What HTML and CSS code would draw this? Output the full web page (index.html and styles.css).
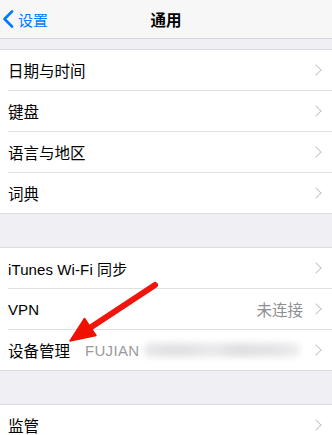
FILE: index.html
```html
<!DOCTYPE html>
<html lang="zh-CN">
<head>
<meta charset="utf-8">
<title>通用</title>
<link rel="stylesheet" href="styles.css">
</head>
<body>
<div class="screen">
  <header class="nav">
    <div class="back">
      <svg class="back-icon" width="12" height="18" viewBox="0 0 12 18"><path d="M10 1.5 L2.5 9 L10 16.5" fill="none" stroke="#007aff" stroke-width="2.6" stroke-linecap="round" stroke-linejoin="round"/></svg>
      <span>设置</span>
    </div>
    <div class="title">通用</div>
  </header>

  <div class="gap gap-top"></div>
  <ul class="group">
    <li class="row"><span class="label">日期与时间</span><i class="chev"></i></li>
    <li class="row"><span class="label">键盘</span><i class="chev"></i></li>
    <li class="row"><span class="label">语言与地区</span><i class="chev"></i></li>
    <li class="row"><span class="label">词典</span><i class="chev"></i></li>
  </ul>

  <div class="gap"></div>
  <ul class="group">
    <li class="row"><span class="label latin">iTunes Wi-Fi 同步</span><i class="chev"></i></li>
    <li class="row"><span class="label latin">VPN</span><span class="value">未连接</span><i class="chev"></i></li>
    <li class="row"><span class="label">设备管理</span><span class="detail">FUJIAN</span><span class="blur"></span><i class="chev"></i></li>
  </ul>

  <div class="gap"></div>
  <ul class="group">
    <li class="row"><span class="label">监管</span><i class="chev"></i></li>
  </ul>

  <svg class="arrow" width="332" height="435" viewBox="0 0 332 435">
    <defs>
      <linearGradient id="ar" x1="0" y1="0" x2="1" y2="1">
        <stop offset="0" stop-color="#ff2a1a"/>
        <stop offset="1" stop-color="#e00000"/>
      </linearGradient>
    </defs>
    <line x1="155" y1="285" x2="92" y2="326.5" stroke="url(#ar)" stroke-width="6" stroke-linecap="round"/>
    <polygon points="70,341 96,335.5 84.5,318.5" fill="#f01000" stroke="#f01000" stroke-width="1.5" stroke-linejoin="round"/>
  </svg>
</div>
</body>
</html>
```

FILE: styles.css
```css
html, body {
  margin: 0;
  padding: 0;
  background: #efeff4;
}
.screen {
  position: relative;
  width: 332px;
  height: 435px;
  overflow: hidden;
  font-family: "Noto Sans CJK SC", "Liberation Sans", sans-serif;
  color: #000;
}
.nav {
  height: 38px;
  background: #f7f7f8;
  border-bottom: 1px solid #d6d6da;
  display: flex;
  align-items: center;
  justify-content: center;
  position: relative;
}
.back {
  position: absolute;
  left: 2px;
  top: 0;
  height: 38px;
  display: flex;
  align-items: center;
  gap: 4px;
  color: #007aff;
  font-size: 15px;
}
.back-icon {
  display: block;
}
.title {
  font-size: 15.5px;
  font-weight: 600;
}
.gap {
  height: 33px;
}
.gap-top {
  height: 10px;
}
.group {
  list-style: none;
  margin: 0;
  padding: 0 0 0 8px;
  background: #fff;
  border-top: 1px solid #dcdce0;
  border-bottom: 1px solid #dcdce0;
}
.row {
  height: 41px;
  display: flex;
  align-items: center;
  padding-right: 9px;
  border-bottom: 1px solid #e0e0e3;
  box-sizing: border-box;
}
.row:last-child {
  border-bottom: none;
  height: 40px;
}
.label {
  font-size: 15.5px;
  white-space: nowrap;
}
.latin {
  font-family: "Liberation Sans", "Noto Sans CJK SC", sans-serif;
  font-size: 15px;
  letter-spacing: 0.1px;
}
.value {
  margin-left: auto;
  margin-right: 9px;
  font-size: 15.5px;
  color: #8e8e93;
}
.detail {
  margin-left: 15px;
  font-family: "Liberation Sans", sans-serif;
  font-size: 15px;
  color: #9a9a9e;
  letter-spacing: 0.3px;
}
.blur {
  flex: 1;
  height: 14px;
  margin: 0 12px 0 5px;
  background: linear-gradient(90deg, #e8e8ea 0%, #e0e0e2 20%, #eaeaec 45%, #dfdfe1 60%, #e5e5e7 85%, #eeeef0 100%);
  filter: blur(3px);
  border-radius: 6px;
}
.chev {
  margin-left: auto;
  width: 7px;
  height: 7px;
  border-right: 1.6px solid #c7c7cc;
  border-top: 1.6px solid #c7c7cc;
  transform: rotate(45deg);
  margin-right: 3px;
}
.value + .chev,
.blur + .chev {
  margin-left: 0;
}
.arrow {
  position: absolute;
  left: 0;
  top: 0;
  pointer-events: none;
}
```
